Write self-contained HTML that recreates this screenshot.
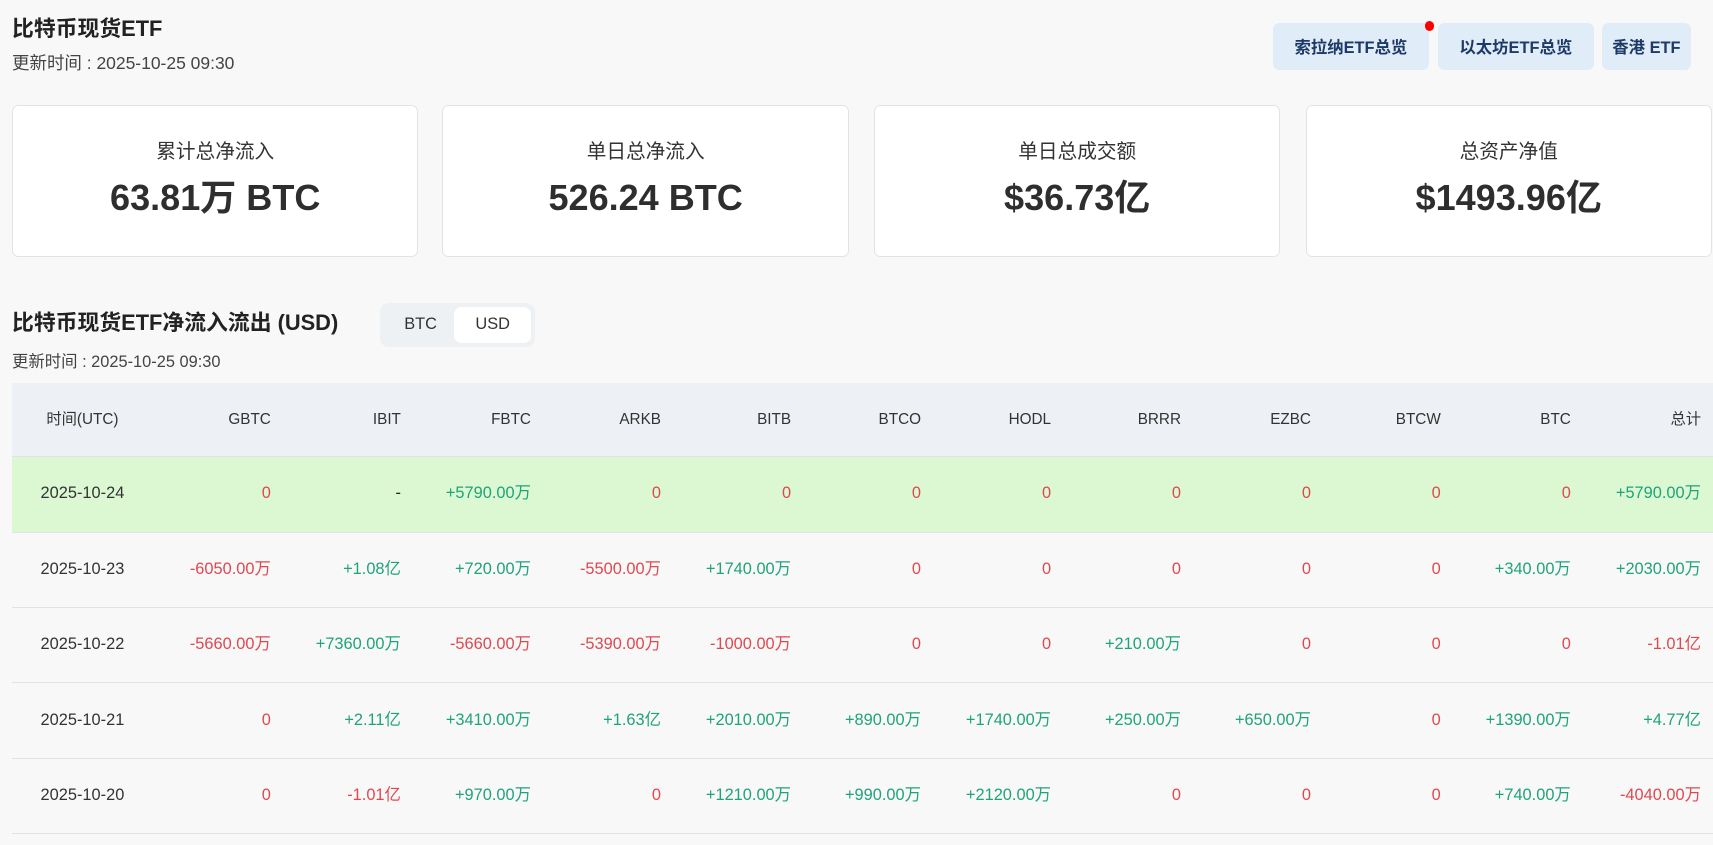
<!DOCTYPE html>
<html><head><meta charset="utf-8"><style>
*{box-sizing:border-box;margin:0;padding:0}
html{background:#f8f8f8}
body{width:1568px;height:773px;zoom:1.0925;background:#f8f8f8;font-family:"Liberation Sans","Noto Sans CJK SC",sans-serif;color:#222;position:relative;overflow:hidden}
.abs{position:absolute}
h1{position:absolute;left:11px;top:14px;font-size:20px;line-height:26px;font-weight:bold;color:#222}
.sub{position:absolute;left:11px;font-size:16px;line-height:22px;color:#444}
.btn{position:absolute;top:21px;height:43px;background:#e1ecf9;border-radius:6px;color:#1d3a66;font-weight:bold;font-size:15px;display:flex;align-items:center;justify-content:center}
.card{position:absolute;top:96px;width:372px;height:139px;background:#fff;border:1px solid #e3e3e3;border-radius:6px;text-align:center}
.card .l{margin-top:30px;height:24px;line-height:24px;font-size:18px;color:#333}
.card .v{margin-top:10px;height:40px;line-height:40px;font-size:33px;font-weight:bold;color:#2e2e2e}
.tog{position:absolute;left:348px;top:277px;width:142px;height:41px;background:#eef1f4;border-radius:8px}
.tog span{position:absolute;top:4px;height:33px;width:70px;display:flex;align-items:center;justify-content:center;font-size:15px;color:#333}
table{position:absolute;left:11px;top:351px;border-collapse:collapse;font-size:15px}
td,th{height:69px;line-height:20px;text-align:right;padding-right:11px;width:119.6px;font-weight:normal;vertical-align:middle}
td span,th span{display:inline-block;height:20px;line-height:20px;vertical-align:middle}
th{background:#edf1f5;color:#333;height:67px;font-size:14px}
td:first-child,th:first-child{width:130px;text-align:center;padding-right:0;color:#333}
tr{border-bottom:1px solid #e2e2e2}
tr.hl td{background:#dbf8d2}
.r{color:#e04850}.g{color:#1fa37a}
</style></head><body>
<h1>比特币现货ETF</h1>
<div class="sub" style="top:47px">更新时间 : 2025-10-25 09:30</div>
<div class="btn" style="left:1165px;width:143px">索拉纳ETF总览</div>
<div class="abs" style="left:1304px;top:19px;width:9px;height:9px;border-radius:50%;background:#f00"></div>
<div class="btn" style="left:1316px;width:143px">以太坊ETF总览</div>
<div class="btn" style="left:1466px;width:82px">香港 ETF</div>
<div class="card" style="left:11px"><div class="l">累计总净流入</div><div class="v">63.81万 BTC</div></div>
<div class="card" style="left:405px"><div class="l">单日总净流入</div><div class="v">526.24 BTC</div></div>
<div class="card" style="left:800px"><div class="l">单日总成交额</div><div class="v">$36.73亿</div></div>
<div class="card" style="left:1195px"><div class="l">总资产净值</div><div class="v">$1493.96亿</div></div>
<div class="abs" style="left:11px;top:283px;font-size:20px;line-height:26px;font-weight:bold">比特币现货ETF净流入流出 (USD)</div>
<div class="tog"><span style="left:2px">BTC</span><span style="left:68px;background:#fff;border-radius:7px">USD</span></div>
<div class="sub" style="top:320px;font-size:15px">更新时间 : 2025-10-25 09:30</div>
<table>
<tr><th>时间(UTC)</th><th>GBTC</th><th>IBIT</th><th>FBTC</th><th>ARKB</th><th>BITB</th><th>BTCO</th><th>HODL</th><th>BRRR</th><th>EZBC</th><th>BTCW</th><th>BTC</th><th>总计</th></tr>
<tr class="hl"><td>2025-10-24</td><td class="r">0</td><td>-</td><td class="g">+5790.00万</td><td class="r">0</td><td class="r">0</td><td class="r">0</td><td class="r">0</td><td class="r">0</td><td class="r">0</td><td class="r">0</td><td class="r">0</td><td class="g">+5790.00万</td></tr>
<tr><td>2025-10-23</td><td class="r">-6050.00万</td><td class="g">+1.08亿</td><td class="g">+720.00万</td><td class="r">-5500.00万</td><td class="g">+1740.00万</td><td class="r">0</td><td class="r">0</td><td class="r">0</td><td class="r">0</td><td class="r">0</td><td class="g">+340.00万</td><td class="g">+2030.00万</td></tr>
<tr><td>2025-10-22</td><td class="r">-5660.00万</td><td class="g">+7360.00万</td><td class="r">-5660.00万</td><td class="r">-5390.00万</td><td class="r">-1000.00万</td><td class="r">0</td><td class="r">0</td><td class="g">+210.00万</td><td class="r">0</td><td class="r">0</td><td class="r">0</td><td class="r">-1.01亿</td></tr>
<tr><td>2025-10-21</td><td class="r">0</td><td class="g">+2.11亿</td><td class="g">+3410.00万</td><td class="g">+1.63亿</td><td class="g">+2010.00万</td><td class="g">+890.00万</td><td class="g">+1740.00万</td><td class="g">+250.00万</td><td class="g">+650.00万</td><td class="r">0</td><td class="g">+1390.00万</td><td class="g">+4.77亿</td></tr>
<tr><td>2025-10-20</td><td class="r">0</td><td class="r">-1.01亿</td><td class="g">+970.00万</td><td class="r">0</td><td class="g">+1210.00万</td><td class="g">+990.00万</td><td class="g">+2120.00万</td><td class="r">0</td><td class="r">0</td><td class="r">0</td><td class="g">+740.00万</td><td class="r">-4040.00万</td></tr>
</table>
</body></html>
